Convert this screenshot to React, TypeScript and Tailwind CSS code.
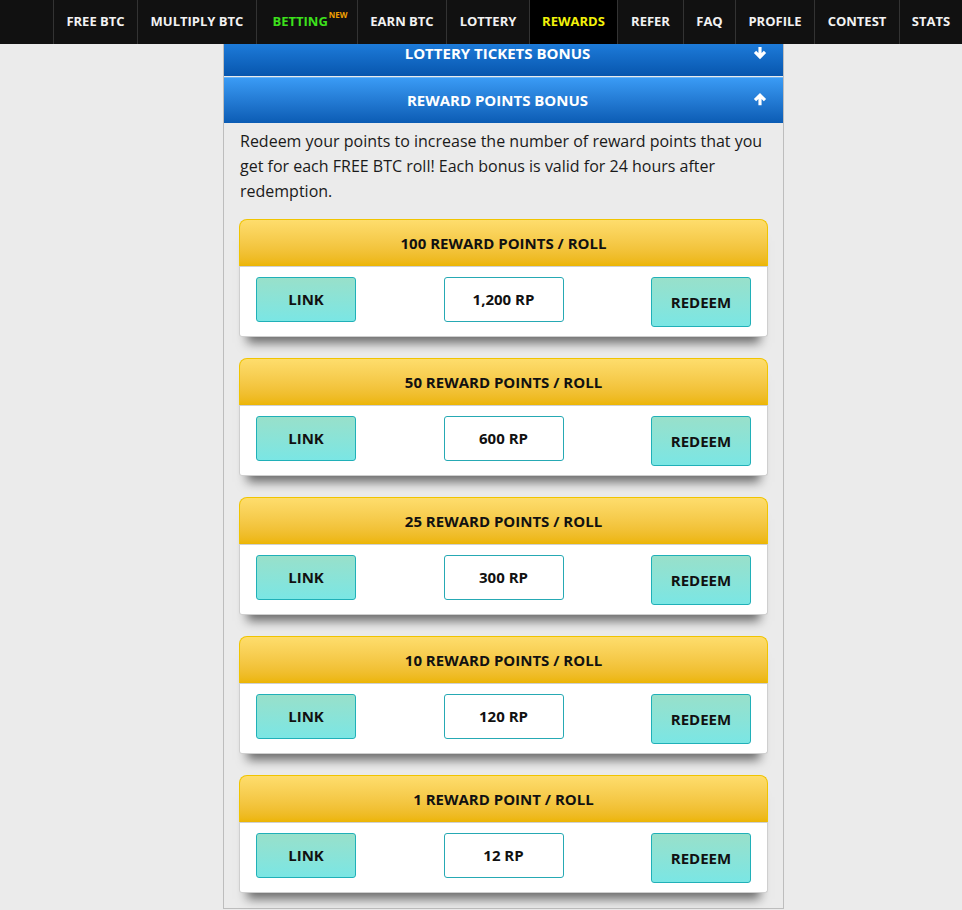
const navItems = [
  { label: "FREE BTC", w: "w-[84px]" },
  { label: "MULTIPLY BTC", w: "w-[119px]" },
  { label: "BETTING", w: "w-[101px]", tone: "betting" },
  { label: "EARN BTC", w: "w-[89px]" },
  { label: "LOTTERY", w: "w-[83px]" },
  { label: "REWARDS", w: "w-[88px]", tone: "active" },
  { label: "REFER", w: "w-[66px]" },
  { label: "FAQ", w: "w-[52px]" },
  { label: "PROFILE", w: "w-[79px]" },
  { label: "CONTEST", w: "w-[85px]" },
  { label: "STATS", w: "w-[63px]" },
];

const bonuses = [
  { title: "100 REWARD POINTS / ROLL", cost: "1,200 RP" },
  { title: "50 REWARD POINTS / ROLL", cost: "600 RP" },
  { title: "25 REWARD POINTS / ROLL", cost: "300 RP" },
  { title: "10 REWARD POINTS / ROLL", cost: "120 RP" },
  { title: "1 REWARD POINT / ROLL", cost: "12 RP" },
];

function Arrow({ up }: { up?: boolean }) {
  return (
    <svg viewBox="0 0 16 16" className={`h-[14px] w-[14px] ${up ? "" : "rotate-180"}`}>
      <path d="M8 1 L15 8 L12.4 10.6 L9.8 8 L9.8 15 L6.2 15 L6.2 8 L3.6 10.6 L1 8 Z" fill="#fff" />
    </svg>
  );
}

function NavBar() {
  return (
    <nav className="flex h-[44px] bg-[#111111] pl-[53px]">
      {navItems.map((item) => (
        <a
          key={item.label}
          className={`flex h-full items-center justify-center border-l border-[#333] text-[13px] font-bold ${item.w} ${
            item.tone === "active"
              ? "bg-[#000] text-[#f2f20a]"
              : item.tone === "betting"
                ? "pl-[6px] text-[#3de21c]"
                : "text-[#f2f2f2]"
          }`}
        >
          {item.label}
          {item.tone === "betting" && (
            <span className="mb-[14px] ml-[1px] text-[8px] leading-none font-bold text-[#f0a000]">
              NEW
            </span>
          )}
        </a>
      ))}
    </nav>
  );
}

function BonusCard({ title, cost }: { title: string; cost: string }) {
  return (
    <div className="rounded-[8px] rounded-b-[3px] shadow-[0_14px_10px_-8px_rgba(0,0,0,0.55)]">
      <div className="flex h-[47px] items-center justify-center rounded-t-[8px] border border-b-0 border-[#f0c400] bg-gradient-to-b from-[#fedd6c] to-[#ecb500] text-[15px] font-bold text-[#111]">
        {title}
      </div>
      <div className="flex h-[71px] items-start justify-between rounded-b-[3px] border border-t-[#d0d0d0] border-[#cfcfcf] bg-white px-[16px] pt-[10px]">
        <button className="h-[45px] w-[100px] rounded-[3px] border border-[#20b0b8] bg-gradient-to-b from-[#98e0ca] to-[#7ae6e4] text-[15px] font-bold text-[#111]">
          LINK
        </button>
        <div className="flex h-[45px] w-[120px] items-center justify-center rounded-[3px] border border-[#26a9b4] bg-white text-[15px] font-bold text-[#111]">
          {cost}
        </div>
        <button className="h-[50px] w-[100px] rounded-[3px] border border-[#20b0b8] bg-gradient-to-b from-[#98e0ca] to-[#7ae6e4] text-[15px] font-bold text-[#111]">
          REDEEM
        </button>
      </div>
    </div>
  );
}

export default function App() {
  return (
    <div
      className="min-h-[910px] bg-[#ebebeb]"
      style={{ fontFamily: '"Open Sans", "Liberation Sans", sans-serif' }}
    >
      <NavBar />
      <div className="ml-[223px] w-[561px] border-x border-b border-[#bdbdbd] bg-[#ebebeb] pb-[15px]">
        <div className="flex h-[32px] items-start justify-center bg-gradient-to-b from-[#1d7bd9] to-[#0756ae] text-[15px] font-bold leading-[18px] text-white">
          <div className="relative flex w-full justify-center pr-[12px]">
            LOTTERY TICKETS BONUS
            <span className="absolute right-[16px] top-[2px]">
              <Arrow />
            </span>
          </div>
        </div>
        <div className="mt-[1px] flex h-[46px] items-center justify-center border-t border-[#6ab4f7] bg-gradient-to-b from-[#3a9bf5] to-[#0b5cb4] text-[15px] font-bold text-white">
          <div className="relative flex w-full justify-center pr-[12px]">
            REWARD POINTS BONUS
            <span className="absolute right-[16px] top-[3px]">
              <Arrow up />
            </span>
          </div>
        </div>
        <div className="px-[15px]">
          <p className="pt-[6px] pl-[1px] text-[16px] leading-[25px] text-[#1a1a1a]">
            Redeem your points to increase the number of reward points that you get for each FREE BTC roll! Each bonus is valid for 24 hours after redemption.
          </p>
          <div className="mt-[15px] flex flex-col gap-[21px]">
            {bonuses.map((b) => (
              <BonusCard key={b.title} title={b.title} cost={b.cost} />
            ))}
          </div>
        </div>
      </div>
    </div>
  );
}
